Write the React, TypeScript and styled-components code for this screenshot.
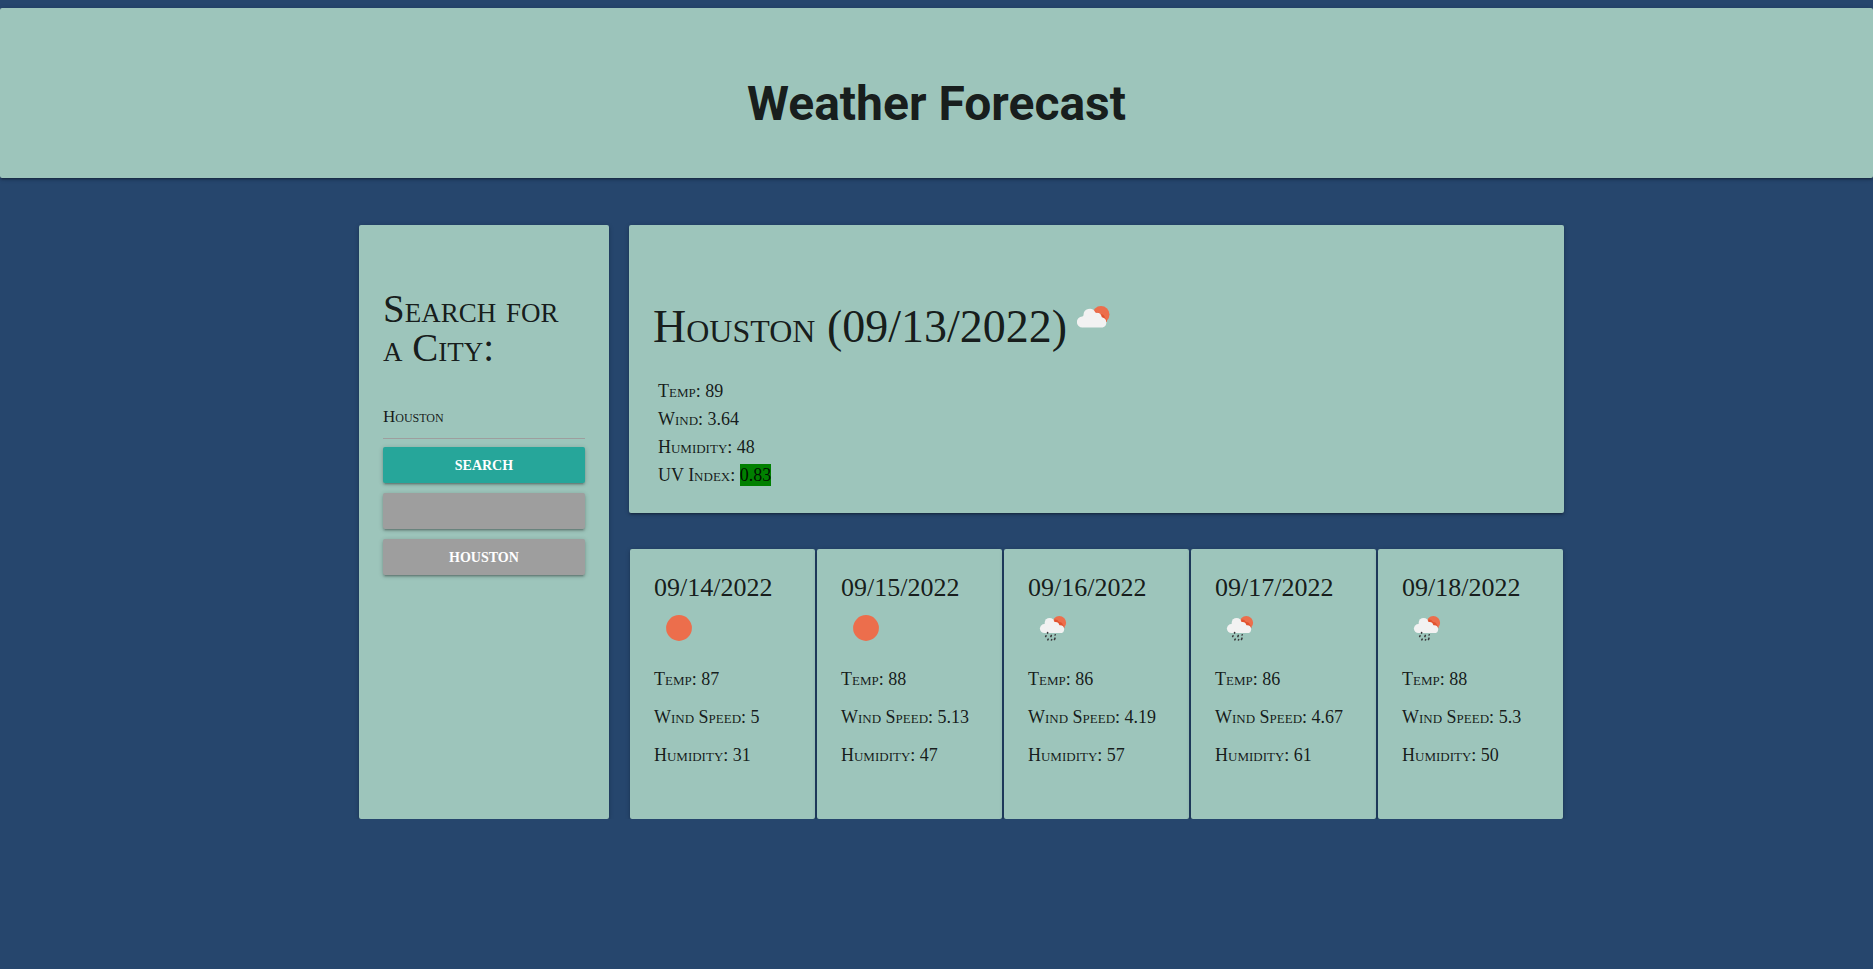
import React, { useState } from "react";
import styled, { createGlobalStyle, css } from "styled-components";

const GlobalStyle = createGlobalStyle`
  *, *::before, *::after { box-sizing: border-box; }
  body {
    margin: 0;
    background: #26466d;
    color: rgba(0, 0, 0, 0.87);
    font-family: "Liberation Serif", serif;
    font-variant-caps: small-caps;
  }
  h1, h2, h3, p, ul { margin: 0; padding: 0; font-weight: 400; }
`;

const panel = css`
  background: #9dc5bb;
  border-radius: 2px;
  box-shadow: 0 2px 2px 0 rgba(0, 0, 0, 0.14), 0 3px 1px -2px rgba(0, 0, 0, 0.12),
    0 1px 5px 0 rgba(0, 0, 0, 0.2);
`;

const Banner = styled.header`
  ${panel}
  margin-top: 8px;
  padding: 66px 24px 44px;
  text-align: center;
`;

const BannerTitle = styled.h1`
  font: 700 48px/60px Roboto, sans-serif;
  font-variant-caps: normal;
`;

const Page = styled.main`
  display: grid;
  grid-template-columns: 250px minmax(0, 1fr);
  gap: 20px;
  width: 70%;
  margin: 47px auto 0;
  padding: 0 28px 0 78px;
`;

const SearchPanel = styled.form`
  ${panel}
  display: flex;
  flex-direction: column;
  padding: 64px 24px 24px;
`;

const SearchTitle = styled.h3`
  font-size: 39px;
  line-height: 39px;
  margin-bottom: 28px;
`;

const CityInput = styled.input`
  height: 44px;
  margin-bottom: 8px;
  padding: 0;
  border: 0;
  border-bottom: 1px solid #9e9e9e;
  border-radius: 0;
  outline: none;
  background: transparent;
  color: inherit;
  font: inherit;
  font-size: 17px;
  font-variant-caps: small-caps;
`;

const Button = styled.button<{ $muted?: boolean }>`
  height: 36px;
  margin-bottom: 10px;
  border: 0;
  border-radius: 2px;
  background: ${(p) => (p.$muted ? "#9e9e9e" : "#26a69a")};
  box-shadow: 0 2px 2px 0 rgba(0, 0, 0, 0.14), 0 3px 1px -2px rgba(0, 0, 0, 0.12),
    0 1px 5px 0 rgba(0, 0, 0, 0.2);
  color: #fff;
  font: 700 14px/36px "Liberation Serif", serif;
  text-transform: uppercase;
  cursor: pointer;
`;

const Results = styled.div`
  display: flex;
  flex-direction: column;
  gap: 36px;
`;

const Today = styled.section`
  ${panel}
  min-height: 288px;
  padding: 70px 24px 24px;
`;

const TodayTitle = styled.h2`
  display: flex;
  gap: 10px;
  font-size: 46px;
  line-height: 64px;
  margin-bottom: 18px;

  svg { margin-top: 11px; }
`;

const TodayList = styled.ul`
  padding-left: 5px;
  list-style: none;
  font-size: 18px;
  line-height: 28px;
`;

const UvBadge = styled.span`
  display: inline-block;
  line-height: 22px;
  background: green;
`;

const Week = styled.section`
  display: grid;
  grid-template-columns: repeat(5, minmax(0, 1fr));
  gap: 2px;
  padding: 0 1px;
`;

const DayCard = styled.article`
  ${panel}
  min-height: 270px;
  padding: 24px;
  font-size: 18px;
`;

const DayDate = styled.h3`
  font-size: 26px;
  line-height: 30px;
`;

const DayIcon = styled.div`
  padding: 11px 0 0 10px;
  margin-bottom: 28px;

  svg { display: block; }
`;

const DayStat = styled.p`
  line-height: 18px;
  margin-bottom: 20px;
`;

function CloudSun() {
  return (
    <svg width="33" height="22" viewBox="0 0 33 22" role="img" aria-label="Few clouds">
      <circle cx="24" cy="8.5" r="8.5" fill="#ec6e4c" />
      <path d="M17 6a6 6 0 0 1 6 2 5 5 0 0 1 5 4 5 5 0 0 1 2 4h-12z" fill="#e2532f" />
      <path
        d="M5.500 21.500a5.500 5.500 0 0 1-.3-11 1.500 1.500 0 0 0 1.300-1.500 6.200 6.200 0 0 1 11.600-3 1.200 1.200 0 0 0 1.300.7 4.800 4.800 0 0 1 5.200 3.800 1 1 0 0 0 1 1 5.200 5.200 0 0 1 0 10z"
        fill="#f2f2f2"
      />
    </svg>
  );
}

function Sun() {
  return (
    <svg width="30" height="28" viewBox="0 0 30 28" role="img" aria-label="Clear sky">
      <circle cx="15" cy="14" r="12.9" fill="#ec6e4c" />
    </svg>
  );
}

function RainSun() {
  return (
    <svg width="30" height="28" viewBox="0 0 30 28" role="img" aria-label="Rain">
      <circle cx="21.3" cy="8.7" r="6.8" fill="#ec6e4c" />
      <path d="M15 6a5 5 0 0 1 6 2 4 4 0 0 1 4 3 4 4 0 0 1 1.500 3h-11z" fill="#e2532f" />
      <g fill="#f2f2f2">
        <circle cx="6.4" cy="14.6" r="4.5" />
        <circle cx="11.6" cy="8.8" r="4.9" />
        <circle cx="17.4" cy="11.8" r="3.9" />
        <circle cx="22.2" cy="15.2" r="3.9" />
        <path d="M6.400 10.100L8 8h9l5.200 4v7.100H6.400z" />
      </g>
      <path
        d="M9.600 18.600v.5M8 21.800l-.3.700M10.200 25.200l-.4.700M13.300 21.400l-.4 1.200M17.200 20.800l-.1.200M13.700 25.600l-.2.400M17 24.200l-.5 1.200"
        stroke="#38383a"
        strokeWidth="1.600"
        strokeLinecap="round"
      />
    </svg>
  );
}

const days = [
  { date: "09/14/2022", sky: "clear", temp: 87, wind: 5, humidity: 31 },
  { date: "09/15/2022", sky: "clear", temp: 88, wind: 5.13, humidity: 47 },
  { date: "09/16/2022", sky: "rain", temp: 86, wind: 4.19, humidity: 57 },
  { date: "09/17/2022", sky: "rain", temp: 86, wind: 4.67, humidity: 61 },
  { date: "09/18/2022", sky: "rain", temp: 88, wind: 5.3, humidity: 50 },
];

export default function App() {
  const [city, setCity] = useState("Houston");
  return (
    <>
      <GlobalStyle />
      <Banner>
        <BannerTitle>Weather Forecast</BannerTitle>
      </Banner>
      <Page>
        <SearchPanel onSubmit={(e) => e.preventDefault()}>
          <SearchTitle>
            <label htmlFor="city">Search for a City:</label>
          </SearchTitle>
          <CityInput id="city" type="text" value={city} onChange={(e) => setCity(e.target.value)} />
          <Button type="submit">Search</Button>
          <Button type="button" $muted aria-label="Empty recent search" />
          <Button type="button" $muted onClick={() => setCity("Houston")}>
            Houston
          </Button>
        </SearchPanel>
        <Results>
          <Today>
            <TodayTitle>
              Houston (09/13/2022)
              <CloudSun />
            </TodayTitle>
            <TodayList>
              <li>Temp: 89</li>
              <li>Wind: 3.64</li>
              <li>Humidity: 48</li>
              <li>
                UV Index: <UvBadge>0.83</UvBadge>
              </li>
            </TodayList>
          </Today>
          <Week>
            {days.map((day) => (
              <DayCard key={day.date}>
                <DayDate>{day.date}</DayDate>
                <DayIcon>{day.sky === "clear" ? <Sun /> : <RainSun />}</DayIcon>
                <DayStat>Temp: {day.temp}</DayStat>
                <DayStat>Wind Speed: {day.wind}</DayStat>
                <DayStat>Humidity: {day.humidity}</DayStat>
              </DayCard>
            ))}
          </Week>
        </Results>
      </Page>
    </>
  );
}
